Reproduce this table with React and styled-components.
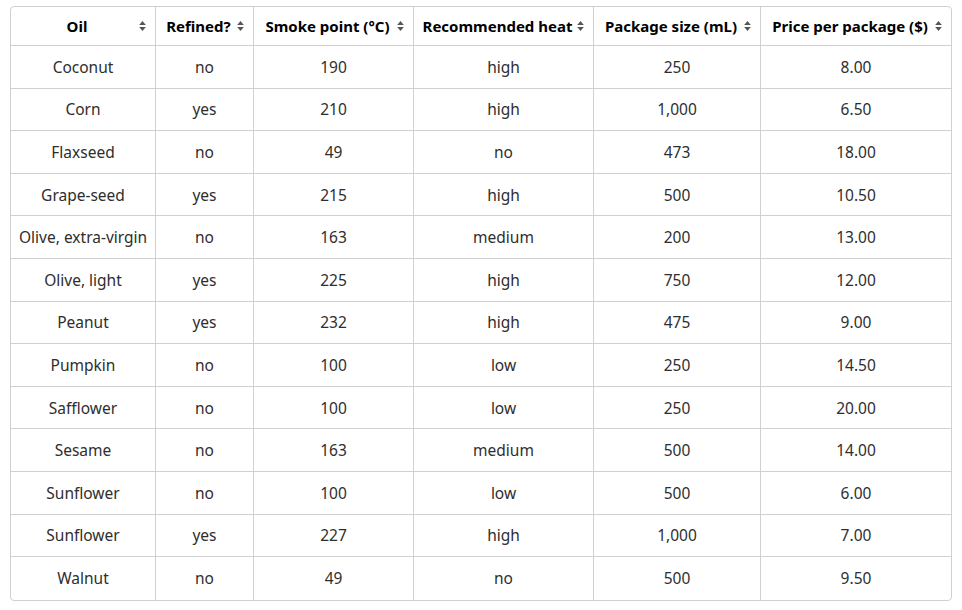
import React from "react";
import styled, { createGlobalStyle } from "styled-components";

const oils = [
  ["Coconut", "no", "190", "high", "250", "8.00"],
  ["Corn", "yes", "210", "high", "1,000", "6.50"],
  ["Flaxseed", "no", "49", "no", "473", "18.00"],
  ["Grape-seed", "yes", "215", "high", "500", "10.50"],
  ["Olive, extra-virgin", "no", "163", "medium", "200", "13.00"],
  ["Olive, light", "yes", "225", "high", "750", "12.00"],
  ["Peanut", "yes", "232", "high", "475", "9.00"],
  ["Pumpkin", "no", "100", "low", "250", "14.50"],
  ["Safflower", "no", "100", "low", "250", "20.00"],
  ["Sesame", "no", "163", "medium", "500", "14.00"],
  ["Sunflower", "no", "100", "low", "500", "6.00"],
  ["Sunflower", "yes", "227", "high", "1,000", "7.00"],
  ["Walnut", "no", "49", "no", "500", "9.50"],
];

const columns = [
  { label: "Oil", width: 145 },
  { label: "Refined?", width: 98 },
  { label: "Smoke point (°C)", width: 160 },
  { label: "Recommended heat", width: 180 },
  { label: "Package size (mL)", width: 167 },
  { label: "Price per package ($)", width: 190 },
];

function SortIcon() {
  return (
    <Sort width="7" height="11" viewBox="0 0 7 11">
      <path d="M3.5 0.5 L6.8 4.6 H0.2 Z" />
      <path d="M3.5 10.5 L6.8 6.4 H0.2 Z" />
    </Sort>
  );
}

export default function App() {
  return (
    <>
      <GlobalStyle />
      <Page>
        <Table>
          <colgroup>
            {columns.map((c) => (
              <col key={c.label} style={{ width: c.width }} />
            ))}
          </colgroup>
          <thead>
            <tr>
              {columns.map((c) => (
                <HeadCell key={c.label}>
                  {c.label}
                  <SortIcon />
                </HeadCell>
              ))}
            </tr>
          </thead>
          <tbody>
            {oils.map((row, i) => (
              <Row key={i}>
                {row.map((v, j) => (
                  <Cell key={j}>{v}</Cell>
                ))}
              </Row>
            ))}
          </tbody>
        </Table>
      </Page>
    </>
  );
}

const GlobalStyle = createGlobalStyle`
  body {
    margin: 0;
    background: #fff;
    font-family: "Noto Sans", "DejaVu Sans", sans-serif;
  }
`;

const Page = styled.div`
  padding: 6px 12px 0 10px;
`;

const Table = styled.table`
  width: 940px;
  table-layout: fixed;
  border-collapse: separate;
  border-spacing: 0;
  border: 1px solid #d0d0d0;
  border-radius: 4px;
  overflow: hidden;
`;

const HeadCell = styled.th`
  position: relative;
  height: 38px;
  padding: 0 20px 0 8px;
  font-size: 15px;
  font-weight: 700;
  color: #000;
  text-align: center;
  white-space: nowrap;
  border-bottom: 1px solid #d0d0d0;
  border-right: 1px solid #d0d0d0;
  &:last-child {
    border-right: none;
  }
`;

const Sort = styled.svg`
  position: absolute;
  right: 9px;
  top: 50%;
  transform: translateY(-50%);
  fill: #555;
`;

const Row = styled.tr`
  height: 42.6px;
  &:last-child td {
    border-bottom: none;
  }
`;

const Cell = styled.td`
  padding: 0 8px;
  font-size: 15.5px;
  color: #2e2e2e;
  text-align: center;
  white-space: nowrap;
  border-bottom: 1px solid #d0d0d0;
  border-right: 1px solid #d0d0d0;
  &:last-child {
    border-right: none;
  }
`;
